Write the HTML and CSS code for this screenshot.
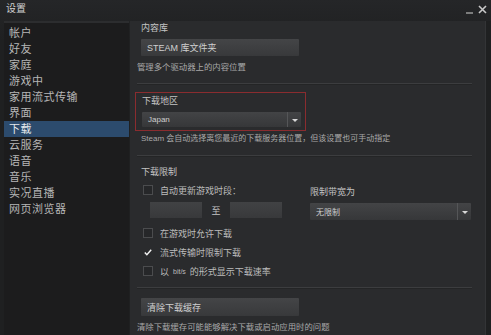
FILE: index.html
```html
<!DOCTYPE html>
<html>
<head>
    <meta charset="UTF-8">
    <link rel="stylesheet" href="styles.css">
</head>
<body>
    <div class="window">
        <div class="titlebar">
            <span class="title">设置</span>
            <div class="win-controls">
                <svg width="8" height="8" viewBox="0 0 8 8"><path d="M0 7h7" stroke="#9a9a9a" stroke-width="1.5"/></svg>
                <svg width="9" height="9" viewBox="0 0 9 9"><path d="M1 1l7 7M8 1l-7 7" stroke="#c8c8c8" stroke-width="1.6"/></svg>
            </div>
        </div>

        <div class="main">
            <nav class="sidebar">
                <a class="nav-item">帐户</a>
                <a class="nav-item">好友</a>
                <a class="nav-item">家庭</a>
                <a class="nav-item">游戏中</a>
                <a class="nav-item">家用流式传输</a>
                <a class="nav-item">界面</a>
                <a class="nav-item active">下载</a>
                <a class="nav-item">云服务</a>
                <a class="nav-item">语音</a>
                <a class="nav-item">音乐</a>
                <a class="nav-item">实况直播</a>
                <a class="nav-item">网页浏览器</a>
            </nav>

            <section class="content">
                <div class="label indent">内容库</div>
                <button class="btn library-btn">STEAM 库文件夹</button>
                <p class="hint">管理多个驱动器上的内容位置</p>

                <hr class="sep">

                <div class="region-box">
                    <div class="label">下载地区</div>
                    <div class="select region-select">
                        <span class="select-value">Japan</span>
                        <span class="select-arrow"></span>
                    </div>
                </div>
                <p class="hint hint-narrow indent">Steam 会自动选择离您最近的下载服务器位置，但该设置也可手动指定</p>

                <hr class="sep">

                <div class="label indent limits-title">下载限制</div>

                <div class="limits">
                    <div class="limits-left">
                        <label class="check-row">
                            <span class="checkbox"></span>自动更新游戏时段：
                        </label>
                        <div class="time-range">
                            <span class="time-input"></span>
                            <span class="to">至</span>
                            <span class="time-input"></span>
                        </div>
                    </div>
                    <div class="limits-right">
                        <div class="label">限制带宽为</div>
                        <div class="select bandwidth-select">
                            <span class="select-value">无限制</span>
                            <span class="select-arrow"></span>
                        </div>
                    </div>
                </div>

                <label class="check-row">
                    <span class="checkbox"></span>在游戏时允许下载
                </label>
                <label class="check-row">
                    <span class="checkbox checked">
                        <svg width="10" height="9" viewBox="0 0 10 9"><path d="M1 4.5l2.6 2.8L9 1" fill="none" stroke="#f2f2f2" stroke-width="1.8"/></svg>
                    </span>流式传输时限制下载
                </label>
                <label class="check-row">
                    <span class="checkbox"></span>以 <span class="small">bit/s</span> 的形式显示下载速率
                </label>

                <hr class="sep">

                <button class="btn cache-btn">清除下载缓存</button>
                <p class="hint">清除下载缓存可能能够解决下载或启动应用时的问题</p>
            </section>
            <div class="scroll-edge"></div>
        </div>
    </div>
</body>
</html>
```

FILE: styles.css
```css
* {
    margin: 0;
    padding: 0;
    box-sizing: border-box;
}

body {
    width: 491px;
    height: 335px;
    overflow: hidden;
    background: #202122;
    font-family: 'Liberation Sans', 'Noto Sans CJK SC', sans-serif;
    color: #bdbdbd;
}

.window {
    height: 335px;
    display: flex;
    flex-direction: column;
    background: linear-gradient(#252628, #1f2021 40px);
}

.titlebar {
    height: 21px;
    display: flex;
    justify-content: space-between;
    align-items: flex-start;
    padding: 3px 4px 0 6px;
}

.title {
    font-size: 10px;
    line-height: 12px;
    color: #d0d0d0;
}

.win-controls {
    display: flex;
    align-items: flex-end;
    gap: 4px;
    padding-top: 2px;
}

.main {
    flex: 1;
    display: flex;
    padding-left: 4px;
}

.sidebar {
    width: 125px;
    background: #1c1c1d;
    border-top: 2px solid #2c2d2f;
    padding-top: 2px;
    display: flex;
    flex-direction: column;
}

.nav-item {
    height: 16px;
    line-height: 16px;
    padding-left: 5px;
    font-size: 11px;
    letter-spacing: 0.5px;
    color: #b6b6b6;
}

.nav-item.active {
    background: #2c4b6d;
    color: #e4e8ec;
}

.content {
    width: 355px;
    margin-left: 1px;
    background: #2a2b2d;
    padding: 1px 0 0 7px;
    display: flex;
    flex-direction: column;
    align-items: flex-start;
}

.scroll-edge {
    flex: 1;
    background: #1f2021;
    border-left: 1px solid #333436;
}

.label {
    font-size: 9px;
    line-height: 12px;
    color: #c4c4c4;
}

.indent {
    margin-left: 4px;
}

.hint {
    font-size: 8.4px;
    line-height: 12px;
    color: #a9a9a9;
}

.hint-narrow {
    font-size: 8px;
}

.btn {
    font-family: inherit;
    font-size: 9px;
    color: #d0d0d0;
    text-align: left;
    padding-left: 6px;
    width: 158px;
    border: none;
    border-radius: 1px;
    background: linear-gradient(#444547, #38393b);
}

.library-btn {
    height: 17px;
    margin: 5px 0 5px 4px;
}

.cache-btn {
    height: 18px;
    margin: 9px 0 5px 4px;
}

.sep {
    width: 335px;
    border: none;
    border-top: 1px solid #3c3d3f;
    border-bottom: 1px solid #242526;
    margin-top: 10px;
}

.region-box {
    width: 171px;
    height: 39px;
    margin: 7px 0 2px -2px;
    border: 1px solid #8a2c2f;
    padding: 2px 0 0 6px;
}

.select {
    display: flex;
    align-items: center;
    justify-content: space-between;
    background: linear-gradient(#434446, #363739);
    border-radius: 1px;
}

.region-select {
    width: 159px;
    height: 15px;
    margin-top: 5px;
}

.select-value {
    font-size: 8px;
    color: #cfcfcf;
    padding-left: 6px;
}

.select-arrow {
    width: 14px;
    height: 100%;
    border-left: 1px solid #555658;
    position: relative;
}

.select-arrow::after {
    content: '';
    position: absolute;
    left: 4px;
    top: 50%;
    margin-top: -1px;
    border-left: 3px solid transparent;
    border-right: 3px solid transparent;
    border-top: 3px solid #d8d8d8;
}

.limits-title {
    margin-top: 9px;
}

.limits {
    display: flex;
    margin-top: 6px;
}

.limits-left {
    width: 173px;
    display: flex;
    flex-direction: column;
}

.limits-right {
    padding-top: 2px;
}

.check-row {
    display: flex;
    align-items: center;
    gap: 7px;
    height: 12px;
    margin-left: 6px;
    font-size: 9px;
    color: #bcbcbc;
}

.content > .check-row {
    margin-top: 7px;
}

.checkbox {
    width: 10px;
    height: 10px;
    border: 1px solid #4b4c4e;
    background: #262729;
    display: flex;
    align-items: center;
    justify-content: center;
}

.checkbox.checked {
    border-color: #2a2b2d;
    background: transparent;
}

.small {
    font-size: 7px;
    margin: 0 -3px;
}

.time-range {
    display: flex;
    align-items: center;
    margin: 6px 0 0 13px;
}

.time-input {
    width: 52px;
    height: 16px;
    background: linear-gradient(#414244, #38393b);
}

.to {
    width: 28px;
    text-align: center;
    font-size: 9px;
    color: #c4c4c4;
}

.bandwidth-select {
    width: 161px;
    height: 17px;
    margin-top: 5px;
}
```
